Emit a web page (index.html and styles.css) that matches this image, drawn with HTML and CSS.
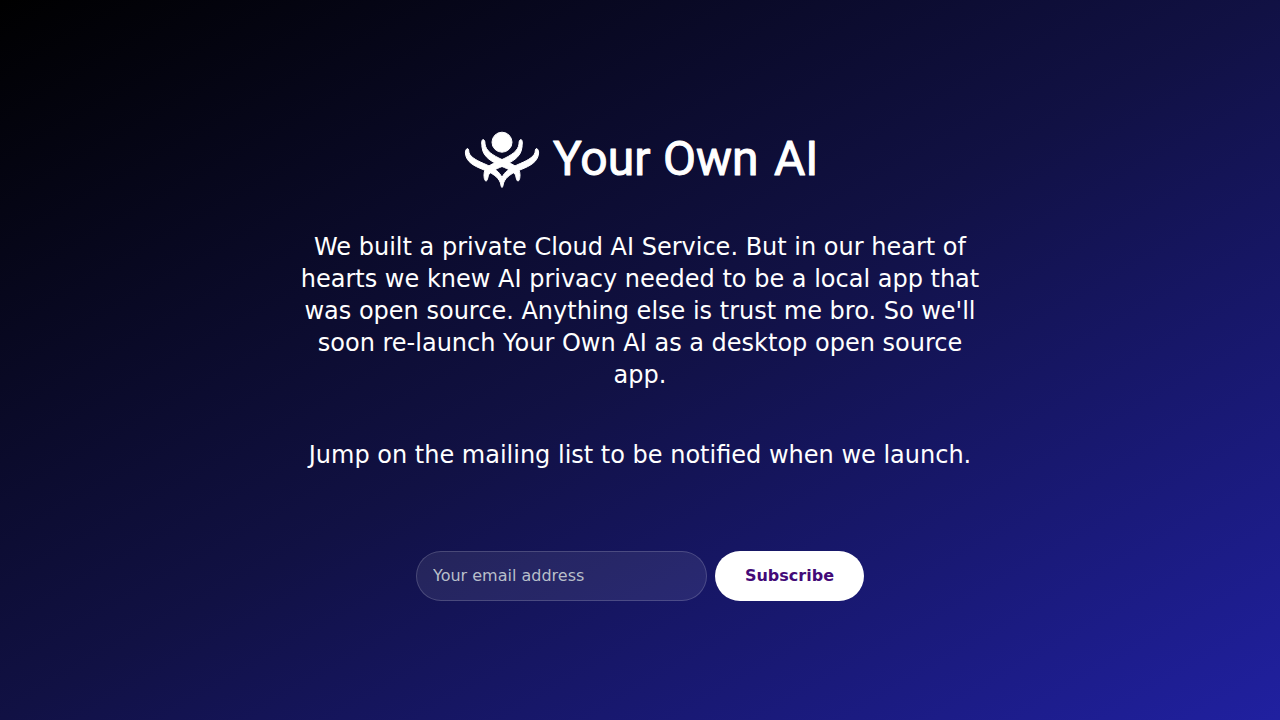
FILE: index.html
```html
<!DOCTYPE html>
<html lang="en">
<head>
<meta charset="utf-8">
<meta name="viewport" content="width=device-width, initial-scale=1">
<title>Your Own AI</title>
<link rel="stylesheet" href="styles.css">
</head>
<body>
<main class="page">
  <h1 class="brand">
    <svg class="brand-logo" viewBox="0 0 350 56" role="img" aria-label="Your Own AI">
      <g class="brand-mark">
        <circle cx="37" cy="10.200" r="10"/>
        <path d="M18 7.500C19.500 8 20 9 20 12C21 19 27 23 38 28C49 33 55 35 55 43C55 47 54 49 53 49C51.500 49 51.500 46 50 42C47.500 39 44 37.500 37 34.500C28 30 18 26 17 15C16.500 11 16.500 8 18 7.500Z"/>
        <path d="M56 7.500C54.500 8 54 9 54 12C53 19 47 23 36 28C25 33 19 35 19 43C19 47 20 49 21 49C22.500 49 22.500 46 24 42C26.500 39 30 37.500 37 34.500C46 30 56 26 57 15C57.500 11 57.500 8 56 7.500Z"/>
        <path d="M2.500 16.500C4 17 3.500 18.500 4 20.500C5 25.500 14 29.500 21 32.500C30 36.500 34.500 40 37 45.500C39.500 40 44 36.500 53 32.500C60 29.500 69 25.500 70 20.500C70.500 18.500 70 17 71.500 16.500C73 17 74 19 73.500 22C72.500 30 65 34 56 37.500C47 41 41 44.500 38.500 51C38 54 37.500 55.500 37 55.500C36.500 55.500 36 54 35.500 51C33 44.500 27 41 18 37.500C9 34 1.500 30 .5 22C0 19 1 17 2.500 16.500Z"/>
      </g>
      <g class="brand-name">
        <text x="88" y="43">Your</text>
        <text x="198" y="43">Own</text>
        <text x="309" y="43">AI</text>
      </g>
    </svg>
  </h1>
  <p class="lead">We built a private Cloud AI Service. But in our heart of hearts we knew AI privacy needed to be a local app that was open source. Anything else is trust me bro. So we'll soon re-launch Your Own AI as a desktop open source app.</p>
  <p class="lead">Jump on the mailing list to be notified when we launch.</p>
  <form class="signup">
    <input class="email" type="email" placeholder="Your email address" aria-label="Your email address">
    <button class="subscribe" type="submit">Subscribe</button>
  </form>
</main>
</body>
</html>
```
FILE: styles.css
```css
* { box-sizing: border-box; }
body {
  margin: 0;
  color: #fff;
  font-family: "DejaVu Sans", sans-serif;
}
.page {
  min-height: 100vh;
  padding: 28px 16px 16px;
  display: flex;
  flex-direction: column;
  align-items: center;
  justify-content: center;
  background: linear-gradient(to bottom right, #000, #111144 50%, #2020a0);
}
.brand {
  margin: 0 0 43px;
  line-height: 0;
}
.brand-logo {
  width: 350px;
  max-width: 100%;
  height: auto;
  overflow: visible;
}
.brand-mark {
  fill: #fff;
  stroke: #fff;
  stroke-width: 1px;
  stroke-linejoin: round;
}
.brand-name {
  font-family: Roboto, sans-serif;
  font-size: 48px;
  font-weight: 400;
  fill: #fff;
  stroke: #fff;
  stroke-width: 1px;
  stroke-linejoin: round;
}
.lead {
  width: 100%;
  max-width: 688px;
  margin: 0 0 48px;
  font-size: 24px;
  line-height: 32px;
  text-align: center;
}
.signup {
  width: 100%;
  max-width: 448px;
  margin-top: 32px;
  display: flex;
  gap: 8px;
}
.email,
.subscribe {
  height: 50px;
  border-radius: 25px;
  font: inherit;
  font-size: 16px;
  line-height: 24px;
}
.email {
  flex: 1;
  min-width: 0;
  padding: 0 16px;
  color: #fff;
  background: rgba(255, 255, 255, 0.08);
  border: 1px solid rgba(255, 255, 255, 0.17);
}
.email::placeholder {
  color: #b8bfca;
  opacity: 1;
}
.subscribe {
  padding: 0 30px;
  color: #430a78;
  background: #fff;
  border: 0;
  font-weight: 700;
  cursor: pointer;
}
```
